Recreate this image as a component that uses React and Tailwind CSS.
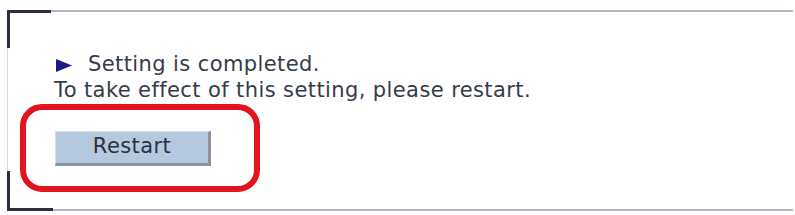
import React from 'react';

export default function App() {
  return (
    <div className="w-[795px] h-[215px] bg-white pt-[10px] pl-[7px] font-['DejaVu_Sans',sans-serif] text-[#363b4b]">
      <div className="relative w-[786px] h-[201px] border-t-[2px] border-b-[2px] border-l border-t-[#aeb7c4] border-b-[#aeb7c4] border-l-[#d6dbe4]">
        {/* corner brackets */}
        <div className="absolute -top-[2px] -left-px w-[44px] h-[38px] border-t-[3px] border-l-[3px] border-[#2b2e3c]" />
        <div className="absolute -bottom-[2px] -left-px w-[46px] h-[40px] border-b-[3px] border-l-[3px] border-[#2b2e3c]" />

        <div className="pt-[39px] pl-[12px]">
          <div className="pl-[34px] text-[21px] leading-[26px] tracking-[0.4px]">
            <div className="flex items-center">
              <svg width="16" height="13" viewBox="0 0 16 13" className="ml-[2px] mr-[16px] mt-[2px]">
                <polygon points="0,0 16,6.5 0,13" fill="#1b1c84" />
              </svg>
              <span>Setting is completed.</span>
            </div>
            <div>To take effect of this setting, please restart.</div>
          </div>

          <div className="mt-[1px] w-[240px] h-[88px] rounded-[22px] border-[6px] border-[#e2141f] flex items-center pl-[29px]">
            <button className="w-[156px] h-[35px] bg-[#b6c8dd] border-t border-l border-t-[#d4dfeb] border-l-[#d4dfeb] border-r-[3px] border-b-[3px] border-r-[#8c939c] border-b-[#8c939c] text-[21px] tracking-[0.4px] text-[#2c3140] flex items-center justify-center">
              Restart
            </button>
          </div>
        </div>
      </div>
    </div>
  );
}
